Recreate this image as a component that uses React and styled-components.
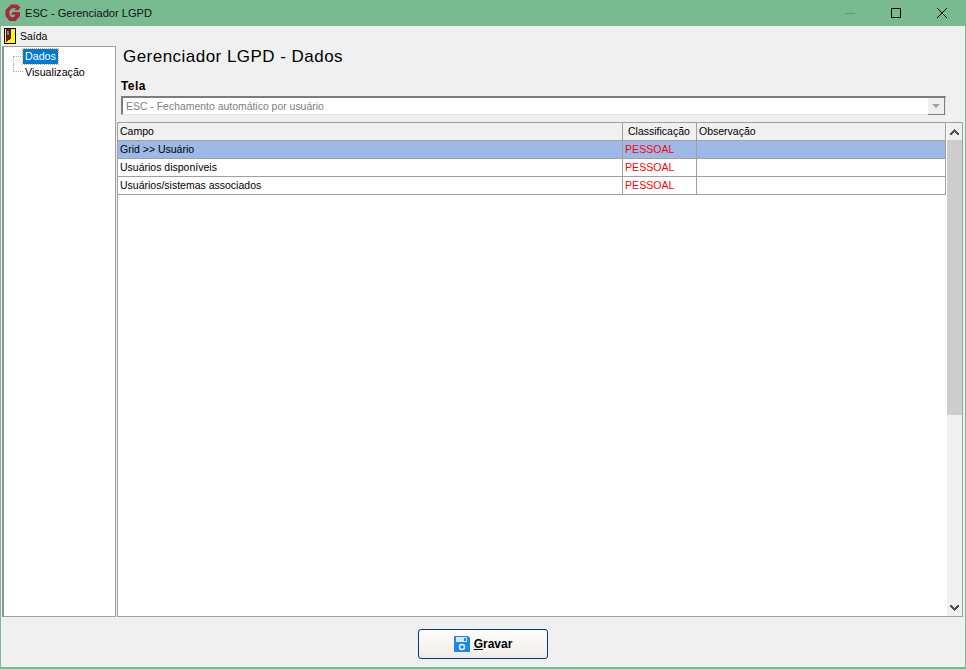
import styled, { createGlobalStyle } from 'styled-components';

const GlobalStyle = createGlobalStyle`
  html, body { margin: 0; padding: 0; background: #f0f0f0; }
  * { box-sizing: border-box; }
  body { font-family: "Liberation Sans", Arial, sans-serif; font-size: 12px; color: #000; }
`;

const rows = [
  { campo: 'Grid >> Usuário', selected: true },
  { campo: 'Usuários disponíveis' },
  { campo: 'Usuários/sistemas associados' },
];

const AppIcon = () => (
  <svg width="18" height="18" viewBox="0 0 18 18">
    <path d="M16.5 3.5 L13.5 0.5 H7 L1.5 6 V12 L5.5 17 H11.5 L16 12 V8 H8.5 L7 10.8 H11.5 L10 13 H7 L5.5 11 V7 L8 4.2 H12 L10.5 6.2 H14 Z" fill="#a8263f" />
  </svg>
);

const DoorIcon = () => (
  <svg width="12" height="16" viewBox="0 0 12 16" shapeRendering="crispEdges">
    <rect width="12" height="16" fill="#000" />
    <rect x="1" y="1" width="10" height="14" fill="#ffff00" />
    <path d="M2 1 H7 V11 L2 14 Z" fill="#7a1010" />
    <rect x="3" y="3" width="2" height="4" fill="#00b7c3" />
  </svg>
);

const SaveIcon = () => (
  <svg width="16" height="16" viewBox="0 0 16 16">
    <path d="M0 0 H14 L16 2 V16 H0 Z" fill="#1e88e5" />
    <rect x="2" y="1" width="11" height="5" fill="#d6e9fa" />
    <rect x="10" y="2" width="2" height="3" fill="#1e88e5" />
    <circle cx="8" cy="11" r="2.5" fill="none" stroke="#e3f1fc" strokeWidth="1.5" />
  </svg>
);

const ScrollArrow = ({ down }) => (
  <svg width="9" height="6" viewBox="0 0 9 6" shapeRendering="crispEdges">
    <path d={down ? 'M0 0H2V1H3V2H4V3H5V2H6V1H7V0H9V2H8V3H7V4H6V5H5V6H4V5H3V4H2V3H1V2H0Z' : 'M4 0H5V1H6V2H7V3H8V4H9V6H7V5H6V4H5V3H4V4H3V5H2V6H0V4H1V3H2V2H3V1H4Z'} fill="#505050" />
  </svg>
);

export default function App() {
  return (
    <>
      <GlobalStyle />
      <Window>
        <TitleBar>
          <AppIcon />
          <TitleText>ESC - Gerenciador LGPD</TitleText>
          <WindowButtons>
            <WindowButton>
              <svg width="12" height="12" viewBox="0 0 12 12"><path d="M1 6.5H11" stroke="#5f9c76" strokeWidth="1" /></svg>
            </WindowButton>
            <WindowButton>
              <svg width="12" height="12" viewBox="0 0 12 12" shapeRendering="crispEdges"><rect x="1.5" y="1.5" width="9" height="9" fill="none" stroke="#000" /></svg>
            </WindowButton>
            <WindowButton>
              <svg width="12" height="12" viewBox="0 0 12 12"><path d="M1 1L11 11M11 1L1 11" stroke="#000" strokeWidth="1" /></svg>
            </WindowButton>
          </WindowButtons>
        </TitleBar>

        <MenuBar>
          <DoorIcon />
          <MenuLabel>Saída</MenuLabel>
        </MenuBar>

        <Body>
          <Tree>
            <TreeRow>
              <Connector $first />
              <TreeLabel $selected>Dados</TreeLabel>
            </TreeRow>
            <TreeRow>
              <Connector />
              <TreeLabel>Visualização</TreeLabel>
            </TreeRow>
          </Tree>

          <Content>
            <Heading>Gerenciador LGPD - Dados</Heading>
            <FieldLabel>Tela</FieldLabel>
            <Combo>
              <ComboText>ESC - Fechamento automático por usuário</ComboText>
              <ComboButton />
            </Combo>

            <GridBox>
              <GridMain>
                <GridRow $header>
                  <Cell $w={505}>Campo</Cell>
                  <Cell $w={74} $pad={5}>Classificação</Cell>
                  <Cell $last>Observação</Cell>
                </GridRow>
                {rows.map((r) => (
                  <GridRow key={r.campo} $selected={r.selected}>
                    <Cell $w={505}>{r.campo}</Cell>
                    <Cell $w={74} $red>PESSOAL</Cell>
                    <Cell $last />
                  </GridRow>
                ))}
              </GridMain>
              <ScrollBar>
                <ScrollBtn><ScrollArrow /></ScrollBtn>
                <ScrollThumb />
                <ScrollTrack />
                <ScrollBtn><ScrollArrow down /></ScrollBtn>
              </ScrollBar>
            </GridBox>
          </Content>
        </Body>

        <Footer>
          <SaveButton>
            <SaveIcon />
            <SaveLabel><u>G</u>ravar</SaveLabel>
          </SaveButton>
        </Footer>
      </Window>
    </>
  );
}

const Window = styled.div`
  width: 966px;
  height: 669px;
  display: flex;
  flex-direction: column;
  background: #f0f0f0;
  border: 1px solid #78bb90;
  border-top: 0;
  overflow: hidden;
`;

const TitleBar = styled.div`
  height: 26px;
  flex: none;
  display: flex;
  align-items: center;
  padding-left: 3px;
  background: #78bb90;
`;

const TitleText = styled.span`
  margin-left: 3px;
  font-size: 11.1px;
  color: #111;
`;

const WindowButtons = styled.div`
  margin-left: auto;
  display: flex;
`;

const WindowButton = styled.div`
  width: 46px;
  height: 26px;
  display: flex;
  align-items: center;
  justify-content: center;
`;

const MenuBar = styled.div`
  height: 20px;
  flex: none;
  display: flex;
  align-items: center;
  padding-left: 3px;
  gap: 4px;
`;

const MenuLabel = styled.span`
  font-size: 10.5px;
`;

const Body = styled.div`
  height: 571px;
  flex: none;
  display: flex;
  padding-left: 1px;
`;

const Tree = styled.div`
  width: 114px;
  flex: none;
  padding: 1px 0 0 9px;
  background: #fff;
  border: 1px solid #a0a0a0;
  border-left: 2px solid #909090;
`;

const TreeRow = styled.div`
  height: 16px;
  display: flex;
  align-items: center;
`;

const Connector = styled.div`
  width: 10px;
  height: 8px;
  flex: none;
  border-left: 1px dotted #b0b0b0;
  ${(p) => (p.$first
    ? 'align-self: flex-end; border-top: 1px dotted #b0b0b0;'
    : 'align-self: flex-start; border-bottom: 1px dotted #b0b0b0;')}
`;

const TreeLabel = styled.span`
  padding: 1px 2px;
  line-height: 13px;
  font-size: 10.7px;
  ${(p) => p.$selected && 'background: #0078d7; color: #fff; outline: 1px dotted #f0a030;'}
`;

const Content = styled.div`
  flex: 1;
  min-width: 0;
  padding-left: 1px;
  display: flex;
  flex-direction: column;
`;

const Heading = styled.h1`
  margin: 0;
  padding: 1px 0 0 6px;
  height: 32px;
  line-height: 20px;
  font-size: 17px;
  font-weight: 400;
  letter-spacing: 0.47px;
`;

const FieldLabel = styled.div`
  padding-left: 4px;
  height: 18px;
  line-height: 17px;
  font-weight: 700;
  font-size: 12px;
  letter-spacing: 0.4px;
`;

const Combo = styled.div`
  width: 825px;
  height: 19px;
  margin-left: 4px;
  flex: none;
  display: flex;
  align-items: center;
  background: #fff;
  border-top: 2px solid #7d7d7d;
  border-left: 2px solid #7d7d7d;
  border-right: 1px solid #e3e3e3;
  border-bottom: 1px solid #e3e3e3;
`;

const ComboText = styled.span`
  padding-left: 3px;
  font-size: 10.45px;
  color: #808080;
`;

const ComboButton = styled.div`
  margin-left: auto;
  width: 17px;
  height: 17px;
  background: #f0f0f0;
  border-right: 1px solid #7d7d7d;
  border-bottom: 1px solid #7d7d7d;
  display: flex;
  align-items: center;
  justify-content: center;
  &::after {
    content: "";
    margin-top: 1px;
    border-left: 4px solid transparent;
    border-right: 4px solid transparent;
    border-top: 4px solid #a0a0a0;
  }
`;

const GridBox = styled.div`
  margin-top: 7px;
  width: 846px;
  height: 495px;
  display: flex;
  background: #fff;
  border: 1px solid #a0a0a0;
`;

const GridMain = styled.div`
  width: 828px;
  flex: none;
`;

const GridRow = styled.div`
  height: 18px;
  display: flex;
  border-right: 1px solid #a0a0a0;
  border-bottom: 1px solid #a0a0a0;
  background: ${(p) => (p.$selected ? '#9db9e8' : p.$header ? '#f0f0f0' : '#fff')};
`;

const Cell = styled.div`
  ${(p) => (p.$last ? 'flex: 1;' : `width: ${p.$w}px; flex: none; border-right: 1px solid #a0a0a0;`)}
  padding-left: ${(p) => p.$pad ?? 2}px;
  line-height: 17px;
  font-size: 10.5px;
  white-space: nowrap;
  overflow: hidden;
  ${(p) => p.$red && 'color: #ff0000; font-size: 10.6px;'}
`;

const ScrollBar = styled.div`
  margin-left: 1px;
  flex: 1;
  display: flex;
  flex-direction: column;
  background: #f0f0f0;
`;

const ScrollBtn = styled.div`
  height: 17px;
  flex: none;
  display: flex;
  align-items: center;
  justify-content: center;
`;

const ScrollThumb = styled.div`
  height: 275px;
  flex: none;
  background: #cdcdcd;
`;

const ScrollTrack = styled.div`
  flex: 1;
`;

const Footer = styled.div`
  flex: 1;
  display: flex;
  justify-content: center;
  padding-top: 12px;
  border-bottom: 1px solid #78bb90;
`;

const SaveButton = styled.div`
  width: 130px;
  height: 30px;
  display: flex;
  align-items: center;
  justify-content: center;
  gap: 4px;
  background: linear-gradient(#ffffff, #efebe7);
  border: 1px solid #003c74;
  border-radius: 3px;
`;

const SaveLabel = styled.span`
  font-size: 12px;
  font-weight: 700;
`;
